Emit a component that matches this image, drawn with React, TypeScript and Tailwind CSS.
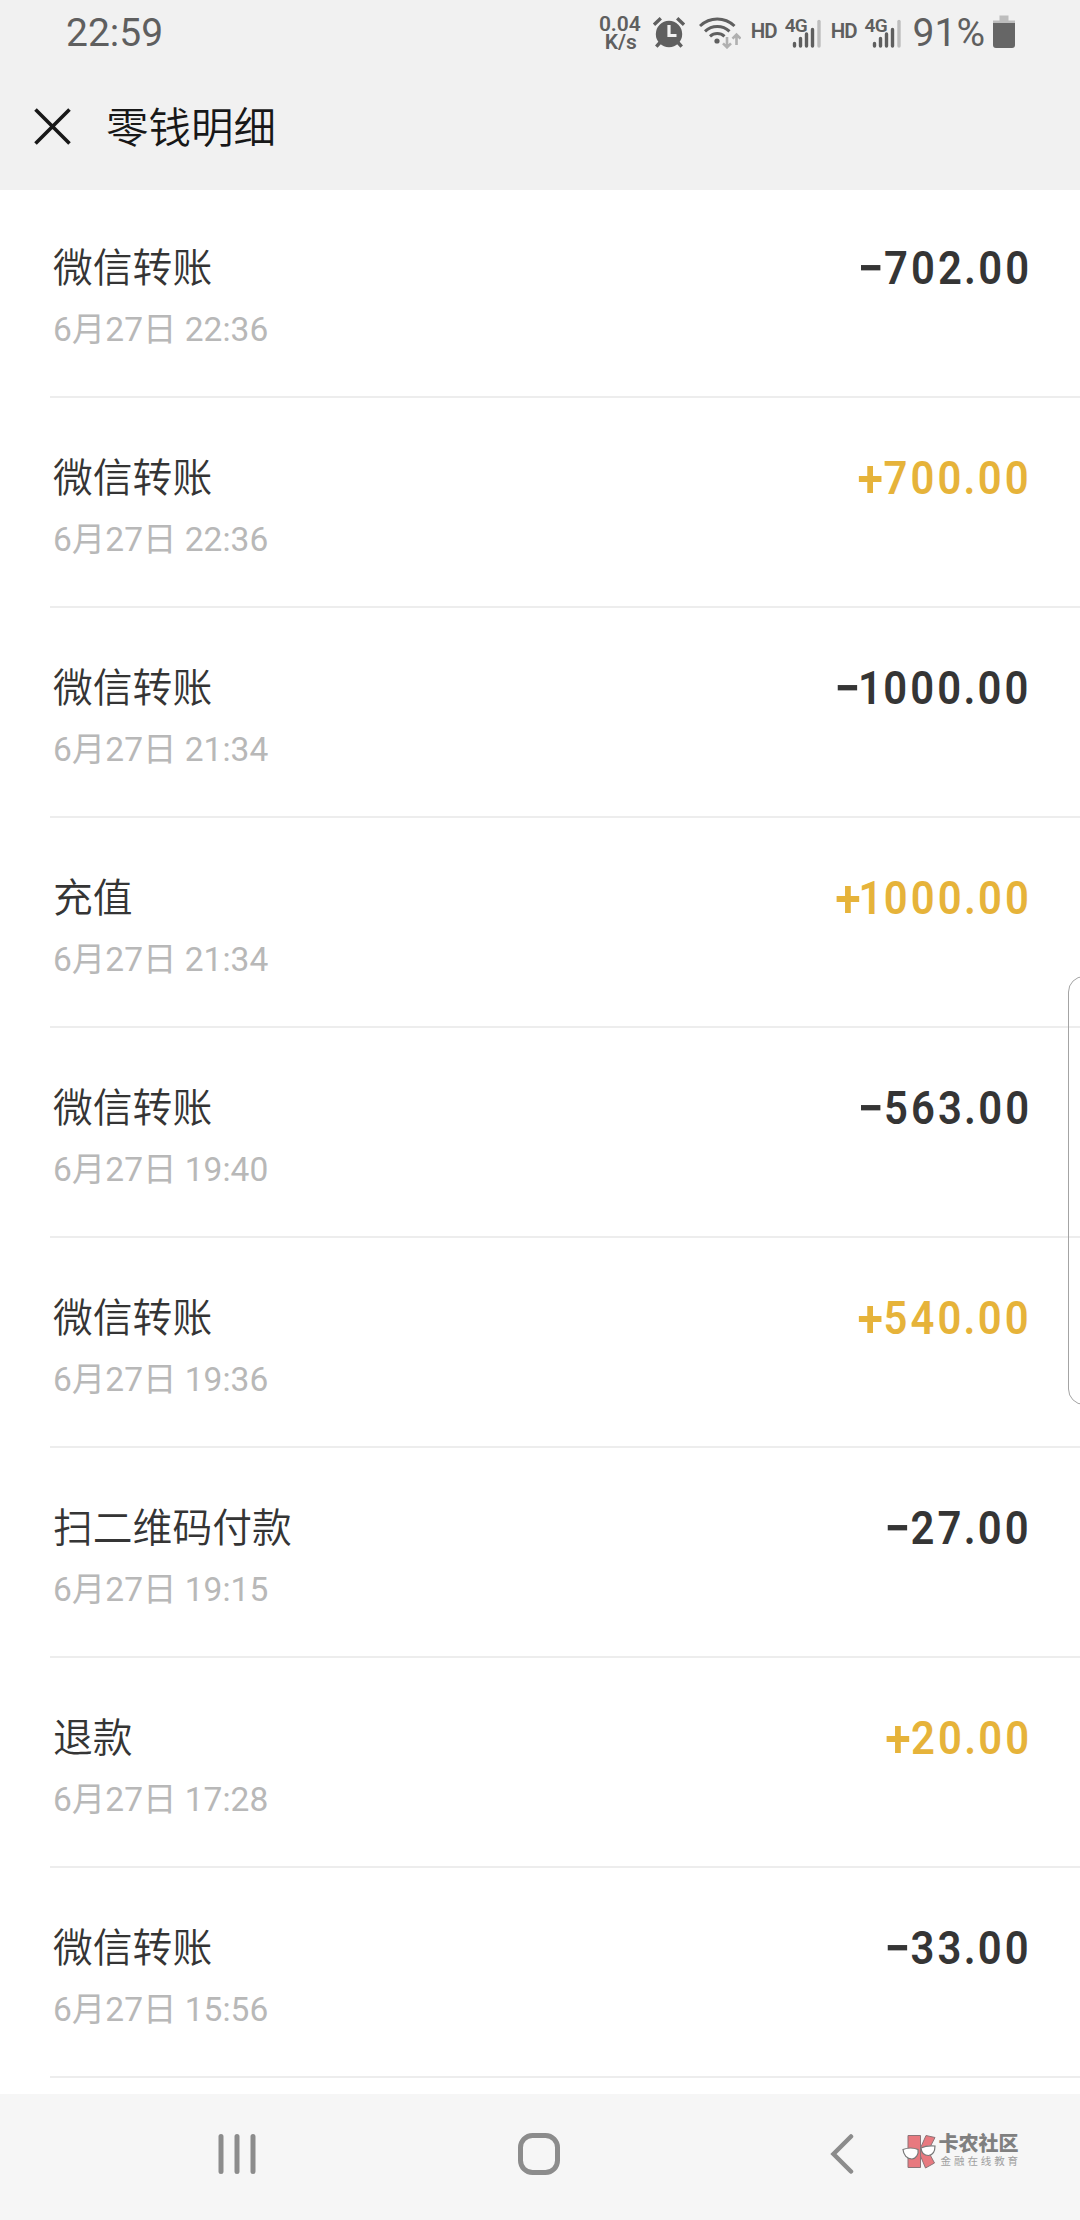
import React from "react";

type Entry = {
    title: string;
    time: string;
    amount: string;
};

const entries: Entry[] = [
    { title: "微信转账", time: "6月27日 22:36", amount: "-702.00" },
    { title: "微信转账", time: "6月27日 22:36", amount: "+700.00" },
    { title: "微信转账", time: "6月27日 21:34", amount: "-1000.00" },
    { title: "充值", time: "6月27日 21:34", amount: "+1000.00" },
    { title: "微信转账", time: "6月27日 19:40", amount: "-563.00" },
    { title: "微信转账", time: "6月27日 19:36", amount: "+540.00" },
    { title: "扫二维码付款", time: "6月27日 19:15", amount: "-27.00" },
    { title: "退款", time: "6月27日 17:28", amount: "+20.00" },
    { title: "微信转账", time: "6月27日 15:56", amount: "-33.00" },
];

function AlarmIcon() {
    return (
        <svg width="34" height="34" viewBox="0 0 34 34" className="ml-[11px]">
            <g stroke="#5f5f5f" strokeLinecap="butt">
                <path d="M2 8.7 8.8 2.3M25.2 2.3l6.8 6.4" strokeWidth="3.4" />
                <path d="M8 26.5 4.3 30.6M26 26.5l3.7 4.1" strokeWidth="3.4" />
            </g>
            <circle cx="17" cy="18" r="13.2" fill="#5f5f5f" />
            <path d="M17 9v10.5h7.5" fill="none" stroke="#f1f1f1" strokeWidth="3.2" />
        </svg>
    );
}

function WifiIcon() {
    return (
        <svg width="42" height="32" viewBox="0 0 42 32" className="ml-[13px]">
            <g fill="none" stroke="#5f5f5f" strokeWidth="3">
                <path d="M1 9C11-.3 25.500-.3 35.500 9" />
                <path d="M6 14.300c7-6.500 17.500-6.500 24.500 0" />
                <path d="M11 19.300c4.200-3.800 10.300-3.800 14.500 0" />
            </g>
            <circle cx="18" cy="24" r="2.6" fill="#5f5f5f" />
            <g fill="none" stroke="#b0b0b0" strokeWidth="2.6">
                <path d="M28 20v10M24 26.3l4 4 4-4" />
                <path d="M37.500 28V18M33.500 21.700l4-4 4 4" />
            </g>
        </svg>
    );
}

function Signal() {
    return (
        <div className="relative h-[32px] w-[36px]">
            <svg width="36" height="32" viewBox="0 0 36 32">
                <g strokeWidth="3.4" strokeLinecap="round" stroke="#5f5f5f">
                    <path d="M9.500 26.500v2.500M15.500 21.500v7.500M21.500 17v12M27.500 12.500v16.500" />
                    <path d="M34 4.500v24.500" stroke="#bdbdbd" />
                </g>
            </svg>
            <span className="absolute -top-px left-0 text-[19px] leading-[19px] font-semibold tracking-[-0.8px]">4G</span>
        </div>
    );
}

function StatusBar() {
    return (
        <div className="flex h-[66px] items-center pr-[65px] pl-[66px] text-[#5f5f5f]">
            <span className="text-[39px] leading-[46px]">22:59</span>
            <div className="ml-auto flex items-center">
                <div className="flex flex-col items-end text-[21px] leading-[18px] font-semibold">
                    <span>0.04</span>
                    <span className="pr-1">K/s</span>
                </div>
                <AlarmIcon />
                <WifiIcon />
                <span className="-mt-[5px] mr-[8px] ml-[10px] text-[20.500px] leading-[20px] font-semibold tracking-[-1px]">HD</span>
                <Signal />
                <span className="-mt-[5px] mr-[8px] ml-[10px] text-[20.500px] leading-[20px] font-semibold tracking-[-1px]">HD</span>
                <Signal />
                <span className="ml-[12px] text-[39px] leading-[46px]">91%</span>
                <svg width="22" height="34" viewBox="0 0 22 34" className="-mt-[2px] ml-[8px]">
                    <path d="M6.500 0.500h9v5H22v5H0v-5h6.500z" fill="#bdbdbd" />
                    <path d="M0 8h22v22a3 3 0 0 1-3 3H3a3 3 0 0 1-3-3z" fill="#666" />
                </svg>
            </div>
        </div>
    );
}

function Amount({ value }: { value: string }) {
    const income = value.startsWith("+");
    // condensed digits with wide tracking; "1" and "." sit tighter than the rest
    return (
        <span
            className={
                "origin-right scale-x-[0.89] text-[47px] leading-[48px] font-semibold tracking-[3.5px] " +
                (income ? "text-[#e6b33a]" : "text-[#353535]")
            }
        >
            <span className="mr-[-3px] align-[-2px] text-[52px] leading-none">{income ? "+" : "−"}</span>
            {value
                .slice(1)
                .split("")
                .map((c, i) => (
                    <span key={i} className={c === "1" ? "-ml-[3px] -mr-[2px]" : c === "." ? "-mx-px" : ""}>
                        {c}
                    </span>
                ))}
        </span>
    );
}

function EntryRow({ title, time, amount }: Entry) {
    return (
        <li className="ml-[50px] flex h-[210px] justify-between border-b-2 border-[#ededed] pt-[55px] pr-[48px] pl-[3px]">
            <div className="flex flex-col pt-px">
                <span className="text-[39.8px] leading-[50px] font-[350] text-[#353535]">{title}</span>
                <span className="mt-[16px] text-[33.5px] leading-[40px] text-[#b8b8b8]">{time}</span>
            </div>
            <Amount value={amount} />
        </li>
    );
}

function Watermark() {
    return (
        <div className="flex items-center">
            <svg width="34" height="36" viewBox="0 0 34 36">
                <g fill="#e8797f" stroke="#8c7478" strokeWidth="1">
                    <path d="M6 1.500h12.500v32H6z" />
                    <path d="M18.500 14 24 1.500l9 2L26 17l6.500 12-9 5-5-12z" />
                </g>
                <g fill="#fff" stroke="#777" strokeWidth="1.2">
                    <path d="M1 15.500c5-2 10-2 15 0 1 5-2 9-6 9.500-5 0-8.500-4-9-9.500z" />
                    <path d="M19 14c5-2.500 9-2.500 14-2 0 5-2 9-6.500 9.500-4.500 0-7-3-7.500-7.500z" />
                </g>
            </svg>
            <div className="ml-[3px] flex flex-col">
                <span className="text-[20px] leading-[21px] font-black text-[#808080]">卡农社区</span>
                <span className="pl-[2px] text-[10.5px] leading-[14px] tracking-[2.9px] text-[#a0a0a0]">金融在线教育</span>
            </div>
        </div>
    );
}

export default function App() {
    return (
        <div className="relative flex h-[2220px] w-[1080px] flex-col overflow-hidden bg-white font-[Roboto,'Noto_Sans_CJK_SC',sans-serif]">
            <header className="h-[190px] bg-[#f1f1f1]">
                <StatusBar />
                <div className="flex h-[122px] items-center pl-[34px]">
                    <svg width="37" height="37" viewBox="0 0 37 37" className="-mt-[2px]">
                        <path d="M1.500 1.500l34 34M35.500 1.500l-34 34" stroke="#181818" strokeWidth="3.6" />
                    </svg>
                    <h1 className="mt-[4px] ml-[35px] text-[42.5px] leading-[50px] font-[350] text-[#181818]">零钱明细</h1>
                </div>
            </header>

            <ul className="-mt-[2px] h-[1906px] overflow-hidden">
                {entries.map((e, i) => (
                    <EntryRow key={i} {...e} />
                ))}
            </ul>

            <nav className="flex h-[126px] items-center bg-[#f6f6f6] pr-[59px] pb-[6px] pl-[218px]">
                <svg width="38" height="40" viewBox="0 0 38 40">
                    <path d="M3 2.500v35M19 2.500v35M35 2.500v35" stroke="#8c8c8c" strokeWidth="5" strokeLinecap="round" />
                </svg>
                <svg width="42" height="42" viewBox="0 0 42 42" className="ml-[262px]">
                    <rect x="2.5" y="2.5" width="37" height="37" rx="12" fill="none" stroke="#8c8c8c" strokeWidth="5" />
                </svg>
                <svg width="24" height="40" viewBox="0 0 24 40" className="ml-[270px]">
                    <path d="M21 2.500 3.500 20l17.500 17.500" fill="none" stroke="#8c8c8c" strokeWidth="4.5" strokeLinecap="round" />
                </svg>
                <div className="ml-auto pb-[5px]">
                    <Watermark />
                </div>
            </nav>

            {/* edge panel handle */}
            <div className="absolute top-[976px] -right-[20px] h-[429px] w-[32px] rounded-[16px] border border-[#a4a4a4]" />
        </div>
    );
}
